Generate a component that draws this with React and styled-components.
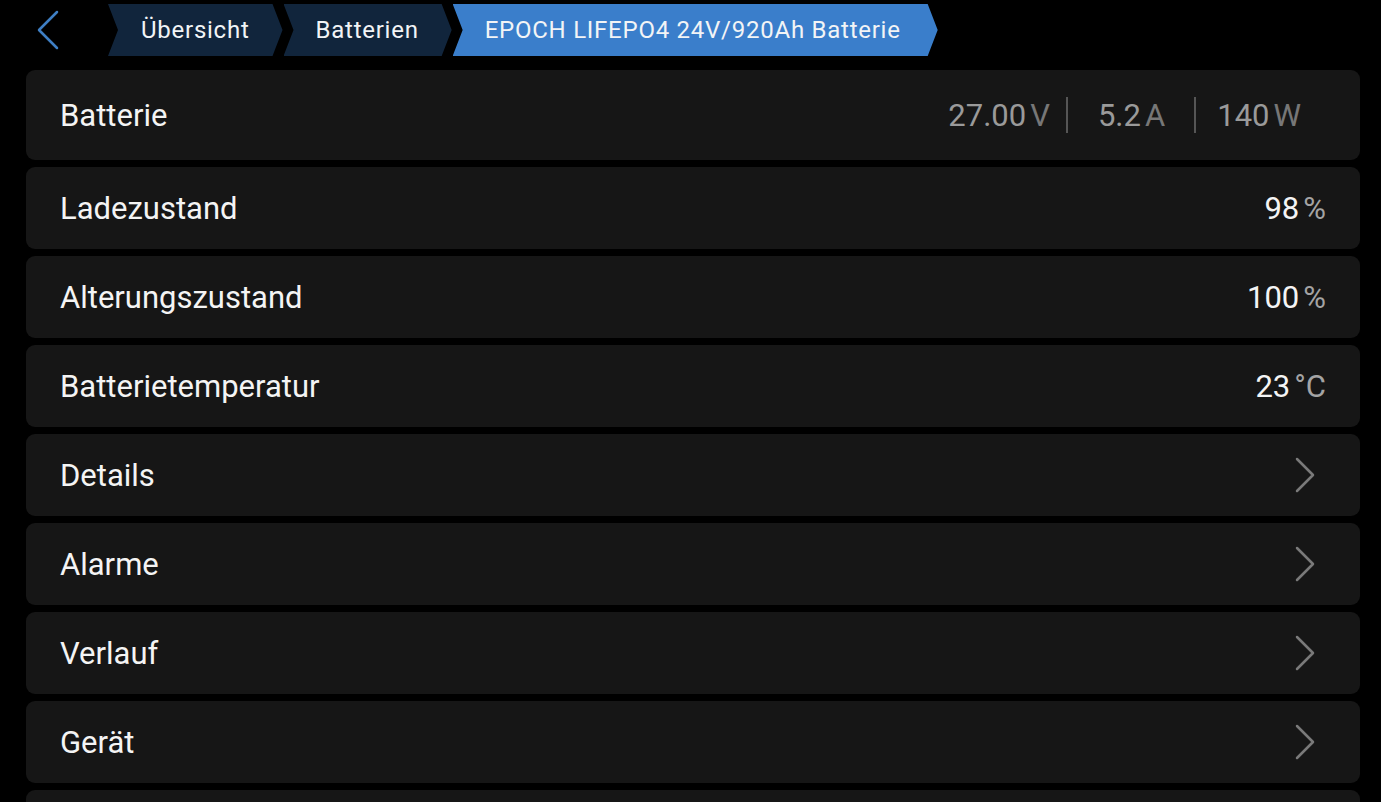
import React from 'react';
import styled, { createGlobalStyle } from 'styled-components';

const GlobalStyle = createGlobalStyle`
    html, body {
        margin: 0;
        padding: 0;
        background: #000;
        font-family: Roboto, "Liberation Sans", sans-serif;
    }
`

const Page = styled.div`
    display: flex;
    flex-direction: column;
    width: 1381px;
    height: 802px;
    overflow: hidden;
    background: #000;
`

const TopBar = styled.div`
    display: flex;
    flex-direction: row;
    align-items: center;
    height: 52px;
    margin-top: 4px;
    padding-left: 34px;
`

const BackBtn = styled.button`
    display: flex;
    align-items: center;
    justify-content: center;
    width: 28px;
    height: 52px;
    padding: 0;
    border: none;
    outline: none;
    background: none;
    margin-right: 46px;
`

const Crumbs = styled.div`
    display: flex;
    flex-direction: row;
    height: 52px;
    gap: 1px;
`

const Crumb = styled.div`
    display: flex;
    align-items: center;
    justify-content: center;
    height: 52px;
    padding: 0 ${props => props.right || 33}px 0 ${props => props.left || 33}px;
    background: ${props => props.active ? '#3a7ecb' : '#11253c'};
    color: #f2f4f6;
    font-size: 24px;
    letter-spacing: 0.75px;
    clip-path: polygon(0 0, calc(100% - 10px) 0, 100% 50%, calc(100% - 10px) 100%, 0 100%, 10px 50%);
    white-space: nowrap;
`

const List = styled.div`
    display: flex;
    flex-direction: column;
    gap: 7px;
    margin: 14px 21px 0 26px;
`

const Row = styled.div`
    display: flex;
    flex-direction: row;
    align-items: center;
    justify-content: space-between;
    height: ${props => props.tall ? '90px' : '82px'};
    flex-shrink: 0;
    padding: 0 ${props => props.pad || 34}px 0 34px;
    background: #161616;
    border-radius: 9px;
`

const Label = styled.span`
    color: #f4f4f4;
    font-size: 31px;
`

const Value = styled.span`
    display: flex;
    align-items: baseline;
    color: ${props => props.dim ? '#9a9a9a' : '#f4f4f4'};
    font-size: 31px;
`

const Unit = styled.span`
    color: ${props => props.dim ? '#777' : '#a4a4a4'};
    margin-left: 4px;
`

const Readings = styled.div`
    display: flex;
    flex-direction: row;
    align-items: center;
`

const Divider = styled.div`
    width: 2px;
    height: 36px;
    background: #555;
    margin: 0 ${props => props.after}px 0 ${props => props.before}px;
`

const Chevron = () => (
    <svg width="22" height="36" viewBox="0 0 22 36">
        <path d="M3 2 L19 18 L3 34" fill="none" stroke="#7a7a7a" strokeWidth="2.5" strokeLinecap="round" strokeLinejoin="round" />
    </svg>
)

const NavRow = ({ label }) => (
    <Row pad={44}>
        <Label>{label}</Label>
        <Chevron />
    </Row>
)

const App = () => {
    return (
        <Page>
            <GlobalStyle />
            <TopBar>
                <BackBtn>
                    <svg width="26" height="40" viewBox="0 0 26 40">
                        <path d="M22 2 L4 20 L22 38" fill="none" stroke="#3f7fc4" strokeWidth="2.5" strokeLinecap="round" strokeLinejoin="round" />
                    </svg>
                </BackBtn>
                <Crumbs>
                    <Crumb>Übersicht</Crumb>
                    <Crumb left={32}>Batterien</Crumb>
                    <Crumb active left={32} right={37}>EPOCH LIFEPO4 24V/920Ah Batterie</Crumb>
                </Crumbs>
            </TopBar>
            <List>
                <Row tall pad={59}>
                    <Label>Batterie</Label>
                    <Readings>
                        <Value dim>27.00<Unit dim>V</Unit></Value>
                        <Divider before={16} after={30} />
                        <Value dim>5.2<Unit dim>A</Unit></Value>
                        <Divider before={29} after={21} />
                        <Value dim>140<Unit dim>W</Unit></Value>
                    </Readings>
                </Row>
                <Row>
                    <Label>Ladezustand</Label>
                    <Value>98<Unit>%</Unit></Value>
                </Row>
                <Row>
                    <Label>Alterungszustand</Label>
                    <Value>100<Unit>%</Unit></Value>
                </Row>
                <Row>
                    <Label>Batterietemperatur</Label>
                    <Value>23<Unit>°C</Unit></Value>
                </Row>
                <NavRow label="Details" />
                <NavRow label="Alarme" />
                <NavRow label="Verlauf" />
                <NavRow label="Gerät" />
                <Row />
            </List>
        </Page>
    );
}

export default App;
